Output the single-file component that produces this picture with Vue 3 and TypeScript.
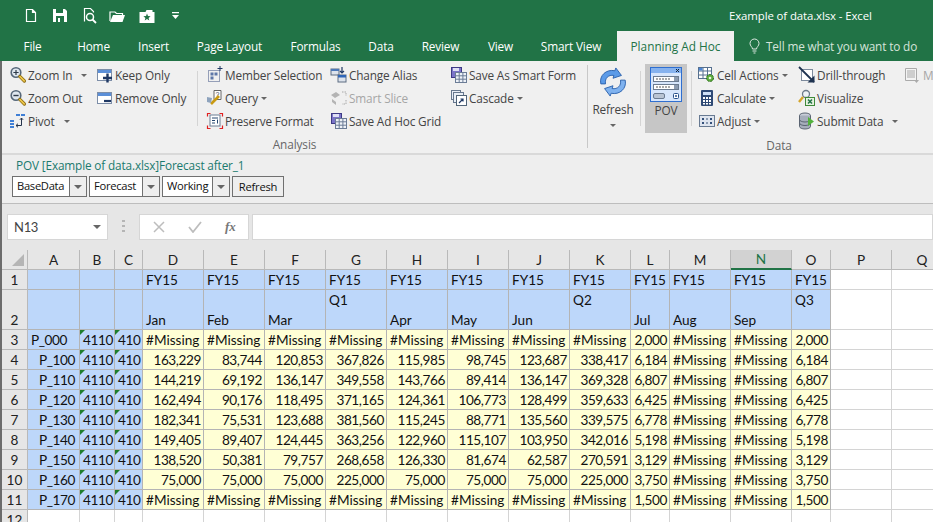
<script setup lang="ts">
interface Item { icon: string; label: string; caret?: 'near' | 'far'; off?: boolean }
const win = (extra: string) => `<rect x="1.5" y="3.5" width="14" height="11" fill="#fff" stroke="#7d8ea8"/><rect x="2" y="4" width="13" height="3" fill="#5b8fd8"/>${extra}`
const lens = (x: string) => `<circle cx="7" cy="6.5" r="4.8" fill="#dfe7ef" stroke="#566779" stroke-width="1.6"/>${x}<path d="M10.8 10.4l4.6 4.6" stroke="#8a6a10" stroke-width="3.2" stroke-linecap="round"/><path d="M11 10.6l4.2 4.2" stroke="#edc64a" stroke-width="1.8" stroke-linecap="round"/>`
const save = `<rect x="1.5" y="1.5" width="10" height="10" fill="#7b74c9" stroke="#3d3a85"/><rect x="3" y="2" width="6" height="3" fill="#dfe0f5"/><rect x="5.5" y="6.5" width="11" height="10" fill="#eef2f8" stroke="#6b7c96"/><path d="M5.5 9.8h11M5.5 13.2h11M9.2 6.5v10M12.9 6.5v10" stroke="#6b7c96" fill="none"/>`
const icons: Record<string, string> = {
  zoomIn: lens('<path d="M4.4 6.5h5.2M7 3.9v5.2" stroke="#2f3b4a" stroke-width="1.2"/>'),
  zoomOut: lens('<path d="M4.4 6.5h5.2" stroke="#2f3b4a" stroke-width="1.4"/>'),
  pivot: `<path d="M7 2h4v2H7zM12 2h4v2h-4zM1 8h4v2H1zM1 11h4v2H1zM1 14h4v2H1z" fill="#3f7fd6"/><path d="M12.5 6v7.5H7M7 13.5l2-1.8M7 13.5l2 1.8M12.5 6l-1.6 1.8M12.5 6l1.6 1.8" stroke="#26354d" fill="none"/>`,
  keepOnly: win('<path d="M7 12h9M11.5 7.5v9" stroke="#1f3864" stroke-width="2.4"/>'),
  removeOnly: win('<path d="M8 12h7" stroke="#1f3864" stroke-width="2.2"/>'),
  memberSel: `<rect x="2.5" y="4.5" width="11" height="11" fill="none" stroke="#3b4f80" stroke-dasharray="1 1"/><path d="M4.5 6.5h3v3h-3zM8.5 6.5h3v3h-3zM4.5 10.5h3v3h-3z" fill="#5f78a8"/><path d="M14 0v5M11.5 2.5h5" stroke="#1f3864"/>`,
  query: `<path d="M8 1.5h7v9H8z" fill="#fff" stroke="#666"/><text x="9.5" y="8" font-size="7" font-family="Liberation Sans" fill="#345">?</text><path d="M5 15l8-8" stroke="#c99a12" stroke-width="2.6"/><path d="M1 8l5 1-1 5-4-1z" fill="#8ea3bd"/>`,
  preserve: `<rect x="4" y="3" width="10" height="11" fill="#fff" stroke="#6c7c92"/><path d="M6 6h6M6 8.5h3M6 11h3" stroke="#26476f"/><path d="M11.5 7.5v4" stroke="#26476f"/><path d="M1.5 4.5v-3h3M13.5 1.5h3v3M1.5 13.5v3h3M13.5 16.5h3v-3" stroke="#e02020" fill="none" stroke-width="1.2"/>`,
  alias: `<rect x="1" y="3" width="8" height="6" fill="#dde3ec" stroke="#5d6d82"/><rect x="1" y="3" width="8" height="2" fill="#4c78b8"/><rect x="8" y="9" width="8" height="7" fill="#dde3ec" stroke="#5d6d82"/><rect x="8" y="9" width="8" height="2.5" fill="#2f66b8"/><path d="M12 1v6M10 5l2 2 2-2" stroke="#1f3864" fill="none" stroke-width="1.2"/>`,
  slice: `<path d="M1 6l5-3 4 3-5 3zM2 10l4 3v3l-4-3z" fill="#b4b4b4"/><path d="M12 3h4v4M16 11v4h-4" stroke="#a8a8a8" stroke-dasharray="1.5 1" fill="none"/>`,
  saveGrid: save,
  cascade: `<rect x="1.5" y="1.5" width="9" height="9" fill="#e8eef6" stroke="#66778e"/><rect x="3.5" y="3.5" width="10" height="10" fill="#e8eef6" stroke="#66778e"/><rect x="6.5" y="6.5" width="10" height="10" fill="#fff" stroke="#516478"/><path d="M9 14l4-4M10.5 10H13v2.5" stroke="#1f3864" fill="none" stroke-width="1.2"/>`,
  cellActions: `<rect x="0.5" y="1.5" width="13" height="11" fill="#fff" stroke="#56708f"/><path d="M0.5 5h13M5 1.5v11M9.5 1.5v11M0.5 9h13" stroke="#56708f"/><rect x="1" y="2" width="3.5" height="2.5" fill="#4d86d6"/><circle cx="12" cy="12" r="3.5" fill="#5cab3c" stroke="#2c6a1e" stroke-dasharray="2 1"/><circle cx="12" cy="12" r="1.3" fill="#e9f6e1"/>`,
  calculate: `<rect x="3" y="1" width="12" height="16" rx="1" fill="#2f4a75"/><rect x="5" y="3" width="8" height="3" fill="#cfe0f6"/><path d="M5 8h2v2H5zM8 8h2v2H8zM11 8h2v2h-2zM5 11h2v2H5zM8 11h2v2H8zM11 11h2v2h-2zM5 14h2v1.5H5zM8 14h2v1.5H8zM11 14h2v1.5h-2z" fill="#fff"/>`,
  adjust: `<rect x="1.5" y="3.5" width="15" height="11" fill="#dfe5ef" stroke="#687a92"/><path d="M4 6h2v2H4zM4 10h2v2H4zM12 6h2v2h-2zM12 10h2v2h-2z" fill="#34507a"/><path d="M8 6h2v2H8zM8 10h2v2H8z" fill="#8a9bb3"/>`,
  drill: `<rect x="3.5" y="3.5" width="11" height="11" fill="#fff" stroke="#7c8a9c"/><path d="M1 1l15 15" stroke="#1f3350" stroke-width="1.8"/><path d="M16.5 9.5v7h-7z" fill="#1f3350"/>`,
  visualize: `<circle cx="8" cy="5" r="3.5" fill="#eef2f6" stroke="#6c7a89" stroke-width="1.3"/><path d="M5 8l-4 5" stroke="#d4a52a" stroke-width="2.4"/><rect x="7.5" y="8.5" width="9" height="8" fill="#e6f2e0" stroke="#3f8a3a"/><path d="M10 10.5l4 4M14 10.5l-4 4" stroke="#217346" stroke-width="1.5"/>`,
  submit: `<ellipse cx="7" cy="3.5" rx="5.5" ry="2.5" fill="#c9ced8" stroke="#5b6472"/><path d="M1.5 3.5v11c0 1.4 2.5 2.5 5.5 2.5s5.5-1.1 5.5-2.5v-11" fill="#a6aebb" stroke="#5b6472"/><path d="M1.5 7.5c0 1.4 2.5 2.5 5.5 2.5s5.5-1.1 5.5-2.5M1.5 11c0 1.4 2.5 2.5 5.5 2.5s5.5-1.1 5.5-2.5" fill="none" stroke="#5b6472"/><path d="M10 5l6 4.5-6 4.5z" fill="#52b23c"/>`,
  grey: `<path d="M1.5 2.5h11v12h-11z" fill="#f4f4f4" stroke="#aaa"/><path d="M3 5h8M3 7h8M3 9h8M3 11h8" stroke="#a8a8a8"/><path d="M10 14h5l-2.5 3z" fill="#aaa"/>`,
}
const analysis: Item[][] = [
  [{ icon: 'zoomIn', label: 'Zoom In', caret: 'far' }, { icon: 'zoomOut', label: 'Zoom Out' }, { icon: 'pivot', label: 'Pivot', caret: 'far' }],
  [{ icon: 'keepOnly', label: 'Keep Only' }, { icon: 'removeOnly', label: 'Remove Only' }],
  [{ icon: 'memberSel', label: 'Member Selection' }, { icon: 'query', label: 'Query', caret: 'near' }, { icon: 'preserve', label: 'Preserve Format' }],
  [{ icon: 'alias', label: 'Change Alias' }, { icon: 'slice', label: 'Smart Slice', off: true }, { icon: 'saveGrid', label: 'Save Ad Hoc Grid' }],
  [{ icon: 'saveGrid', label: 'Save As Smart Form' }, { icon: 'cascade', label: 'Cascade', caret: 'near' }],
]
const analysisWidths = [87, 100, 124, 120, 130]
const dataCols: Item[][] = [
  [{ icon: 'cellActions', label: 'Cell Actions', caret: 'near' }, { icon: 'calculate', label: 'Calculate', caret: 'near' }, { icon: 'adjust', label: 'Adjust', caret: 'near' }],
  [{ icon: 'drill', label: 'Drill-through' }, { icon: 'visualize', label: 'Visualize' }, { icon: 'submit', label: 'Submit Data', caret: 'far' }],
  [{ icon: 'grey', label: 'M', off: true }],
]
const dataWidths = [100, 106, 60]
const tabs = [
  { t: 'File', w: 65 }, { t: 'Home', w: 57 }, { t: 'Insert', w: 63 }, { t: 'Page Layout', w: 89 }, { t: 'Formulas', w: 83 },
  { t: 'Data', w: 48 }, { t: 'Review', w: 71 }, { t: 'View', w: 49 }, { t: 'Smart View', w: 92 },
]
const columns = [
  { n: 'A', w: 52 }, { n: 'B', w: 35 }, { n: 'C', w: 28 }, { n: 'D', w: 61 }, { n: 'E', w: 61 }, { n: 'F', w: 61 }, { n: 'G', w: 61 }, { n: 'H', w: 61 },
  { n: 'I', w: 61 }, { n: 'J', w: 61 }, { n: 'K', w: 61 }, { n: 'L', w: 39 }, { n: 'M', w: 61 }, { n: 'N', w: 61 }, { n: 'O', w: 39 }, { n: 'P', w: 61 }, { n: 'Q', w: 61 },
]
const gridCols = '26px ' + columns.map(c => c.w + 'px').join(' ')
const headTop = ['Jan', 'Feb', 'Mar', 'Q1', 'Apr', 'May', 'Jun', 'Q2', 'Jul', 'Aug', 'Sep', 'Q3']
const M = '#Missing'
const rows: [string, string[]][] = [
  ['P_000', [M, M, M, M, M, M, M, M, '2,000', M, M, '2,000']],
  ['P_100', ['163,229', '83,744', '120,853', '367,826', '115,985', '98,745', '123,687', '338,417', '6,184', M, M, '6,184']],
  ['P_110', ['144,219', '69,192', '136,147', '349,558', '143,766', '89,414', '136,147', '369,328', '6,807', M, M, '6,807']],
  ['P_120', ['162,494', '90,176', '118,495', '371,165', '124,361', '106,773', '128,499', '359,633', '6,425', M, M, '6,425']],
  ['P_130', ['182,341', '75,531', '123,688', '381,560', '115,245', '88,771', '135,560', '339,575', '6,778', M, M, '6,778']],
  ['P_140', ['149,405', '89,407', '124,445', '363,256', '122,960', '115,107', '103,950', '342,016', '5,198', M, M, '5,198']],
  ['P_150', ['138,520', '50,381', '79,757', '268,658', '126,330', '81,674', '62,587', '270,591', '3,129', M, M, '3,129']],
  ['P_160', ['75,000', '75,000', '75,000', '225,000', '75,000', '75,000', '75,000', '225,000', '3,750', M, M, '3,750']],
  ['P_170', [M, M, M, M, M, M, M, M, '1,500', M, M, '1,500']],
]
const combos = [{ t: 'BaseData', w: 57 }, { t: 'Forecast', w: 53 }, { t: 'Working', w: 50 }]
</script>

<template>
  <div class="app">
    <header class="title">
      <div class="qat">
        <svg width="14" height="15" viewBox="0 0 14 15"><path d="M2.5 1.5h6l3 3v9h-9z M8.5 1.5v3h3" fill="none" stroke="#fff" stroke-width="1.2"/></svg>
        <svg width="16" height="15" viewBox="0 0 16 15"><path d="M1 1h12l2 2v11H1z" fill="#fff"/><path d="M4 1h7v4H4z" fill="#217346"/><path d="M4 8h8v6H4z" fill="#217346"/><path d="M6 10h2v4H6z" fill="#fff"/></svg>
        <svg width="16" height="17" viewBox="0 0 16 17"><path d="M2.5 14.5v-13h6l3 3v1" fill="none" stroke="#fff" stroke-width="1.2"/><circle cx="8" cy="10" r="3.5" fill="none" stroke="#fff" stroke-width="1.5"/><path d="M10.5 12.5l3.5 3.5" stroke="#fff" stroke-width="1.8"/></svg>
        <svg class="q4" width="17" height="14" viewBox="0 0 17 14"><path d="M1 12V3h5l1.5 1.5h6V6" fill="none" stroke="#fff" stroke-width="1.2"/><path d="M1 13l3-7h12l-2.5 7z" fill="#fff"/></svg>
        <svg class="q5" width="16" height="14" viewBox="0 0 16 14"><path d="M0.5 3h6l1-2h6v2h2v11H0.5z" fill="#fff"/><path d="M8 4.5l1 2.5 2.6.2-2 1.7.7 2.6L8 10l-2.300 1.500.7-2.600-2-1.700L7 7z" fill="#217346"/></svg>
        <svg class="qcust" width="7" height="7" viewBox="0 0 7 7"><path d="M0 0h7v1.2H0zM0 3h7L3.5 7z" fill="#fff"/></svg>
      </div>
      <div class="doc">Example of data.xlsx - Excel</div>
    </header>
    <nav class="tabs">
      <span v-for="t in tabs" :key="t.t" class="tab" :style="{ width: t.w + 'px' }">{{ t.t }}</span>
      <span class="tab active">Planning Ad Hoc</span>
      <span class="tell">
        <svg width="11" height="16" viewBox="0 0 11 16"><path d="M3.5 11c0-2-2.5-3-2.5-5.500a4.500 4.500 0 0 1 9 0C10 8 7.500 9 7.500 11zM3.500 13h4M4.500 15h2" fill="none" stroke="#dfe9e3"/></svg>
        Tell me what you want to do
      </span>
    </nav>
    <div class="body">
      <section class="ribbon">
        <div class="group analysis">
          <div class="cols">
            <template v-for="(col, i) in analysis" :key="i">
              <div class="col" :style="{ width: analysisWidths[i] + 'px' }">
                <div v-for="it in col" :key="it.label" class="item" :class="{ off: it.off }">
                  <svg class="ic" width="18" height="18" viewBox="0 0 18 18" v-html="icons[it.icon]"></svg>
                  <span>{{ it.label }}</span>
                  <i v-if="it.caret" class="caret" :class="it.caret"></i>
                </div>
              </div>
              <div v-if="i === 1" class="sep short"></div>
            </template>
          </div>
          <div class="glabel">Analysis</div>
        </div>
        <div class="sep full"></div>
        <div class="group data">
          <div class="cols">
            <div class="big refresh">
              <svg width="30" height="30" viewBox="0 0 32 32">
                <path d="M3 18C1 9 9 2 18 4l1-3 6 8-9 3 1-3C11 8 7 12 8 18z" fill="#5c9be8" stroke="#2c62ad"/>
                <path d="M29 14c2 9-6 16-15 14l-1 3-6-8 9-3-1 3c6 1 10-3 9-9z" fill="#7fb2ef" stroke="#2c62ad"/>
              </svg>
              <span class="bl">Refresh</span>
              <i class="caret lone"></i>
            </div>
            <div class="sep short narrowsep"></div>
            <div class="big pov">
              <svg width="32" height="35" viewBox="0 0 32 35">
                <rect x="0.5" y="0.5" width="31" height="34" fill="#d7e6fb" stroke="#2f6fd0"/>
                <rect x="1" y="1" width="30" height="5" fill="#86b2ee"/>
                <path d="M26 2l3 3M29 2l-3 3" stroke="#123"/>
                <rect x="3.5" y="9.5" width="25" height="5" fill="#fff" stroke="#6b7b90"/>
                <rect x="3.5" y="17.5" width="25" height="5" fill="#fff" stroke="#6b7b90"/>
                <path d="M6 12h14M6 20h14" stroke="#555" stroke-dasharray="2 1"/>
                <rect x="24" y="10" width="4" height="4" fill="#8c9bb0"/><rect x="24" y="18" width="4" height="4" fill="#8c9bb0"/>
                <rect x="3.5" y="26.5" width="11" height="5" rx="1.5" fill="#b9c4d3" stroke="#6b7b90"/>
                <rect x="23.5" y="26.5" width="5" height="5" rx="1" fill="#fff" stroke="#27508a"/>
                <circle cx="26" cy="29" r="1" fill="#27508a"/>
              </svg>
              <span class="bl">POV</span>
            </div>
            <div class="sep short narrowsep2"></div>
            <div v-for="(col, i) in dataCols" :key="i" class="col" :style="{ width: dataWidths[i] + 'px' }">
              <div v-for="it in col" :key="it.label" class="item" :class="{ off: it.off }">
                <svg class="ic" width="18" height="18" viewBox="0 0 18 18" v-html="icons[it.icon]"></svg>
                <span>{{ it.label }}</span>
                <i v-if="it.caret" class="caret" :class="it.caret"></i>
              </div>
            </div>
          </div>
          <div class="glabel">Data</div>
        </div>
      </section>
      <section class="povbar">
        <div class="povtitle">POV [Example of data.xlsx]Forecast after_1</div>
        <div class="povctl">
          <div v-for="c in combos" :key="c.t" class="combo">
            <span class="ctext" :style="{ width: c.w + 'px' }">{{ c.t }}</span>
            <span class="cbtn"><i></i></span>
          </div>
          <button class="pbtn" type="button">Refresh</button>
        </div>
      </section>
      <section class="fbar">
        <div class="namebox"><span>N13</span><i></i></div>
        <div class="dots"></div>
        <div class="fxbox">
          <svg width="12" height="12" viewBox="0 0 12 12"><path d="M1 1l10 10M11 1L1 11" stroke="#bdbdbd" stroke-width="1.5"/></svg>
          <svg width="14" height="12" viewBox="0 0 14 12"><path d="M1 6l4 5 8-10" stroke="#bdbdbd" stroke-width="1.8" fill="none"/></svg>
          <span class="fx">fx</span>
        </div>
        <div class="finput"></div>
      </section>
      <section class="sheet" :style="{ gridTemplateColumns: gridCols }">
        <div class="hd corner"><i></i></div>
        <div v-for="c in columns" :key="c.n" class="hd" :class="{ sel: c.n === 'N' }">{{ c.n }}</div>

        <div class="rh">1</div>
        <div v-for="i in 3" :key="'e1' + i" class="c blue"></div>
        <div v-for="i in 12" :key="'f' + i" class="c blue">FY15</div>
        <div class="c"></div><div class="c"></div>

        <div class="rh">2</div>
        <div v-for="i in 3" :key="'e2' + i" class="c blue"></div>
        <div v-for="h in headTop" :key="h" class="c blue" :class="{ top: h[0] === 'Q' }">{{ h }}</div>
        <div class="c"></div><div class="c"></div>

        <template v-for="(r, ri) in rows" :key="r[0]">
          <div class="rh">{{ ri + 3 }}</div>
          <div class="c blue num" :class="ri === 0 ? '' : 'right memberR'">{{ r[0] }}</div>
          <div class="c blue tri num">4110</div>
          <div class="c blue tri num">410</div>
          <div v-for="(v, vi) in r[1]" :key="vi" class="c yellow" :class="{ 'right num': v !== M }">{{ v }}</div>
          <div class="c"></div><div class="c"></div>
        </template>

        <div class="rh">12</div>
        <div v-for="c in columns" :key="'z' + c.n" class="c"></div>
      </section>
    </div>
  </div>
</template>

<style>
html, body { margin: 0; padding: 0; background: #fff; overflow: hidden; }
</style>

<style scoped>
.app { width: 933px; height: 522px; overflow: hidden; font-family: "Open Sans", "Noto Sans", sans-serif; font-size: 12px; color: #444; background: #fff; }
.title { height: 31px; background: #217346; display: flex; align-items: center; color: #fff; }
.qat { display: flex; align-items: center; gap: 14px; padding-left: 24px; width: 729px; box-sizing: border-box; flex: none; }
.q4 { margin-left: -3px; }
.q5 { margin-left: -1px; }
.qcust { margin-left: 3px; }
.doc { font-size: 11.4px; letter-spacing: -0.1px; white-space: nowrap; }
.tabs { height: 30px; background: #217346; display: flex; align-items: stretch; color: #fff; }
.tab { display: flex; align-items: center; justify-content: center; font-size: 11.8px; letter-spacing: -0.15px; white-space: nowrap; flex: none; }
.tab.active { background: #f0f0f0; color: #217346; width: 117px; letter-spacing: 0; }
.tell { display: flex; align-items: center; gap: 6px; margin-left: 15px; color: #d5e4da; font-size: 11.8px; letter-spacing: -0.15px; white-space: nowrap; }
.body { border-left: 2px solid #6c6c6c; }
.ribbon { height: 92px; background: #f0f0f0; display: flex; border-bottom: 2px solid #d9d9d9; color: #444; }
.group { display: flex; flex-direction: column; flex: none; }
.analysis { width: 585px; }
.data { width: 382px; }
.cols { display: flex; height: 72px; padding-top: 2px; box-sizing: border-box; }
.analysis .cols { padding-left: 8px; }
.col { display: flex; flex-direction: column; flex: none; }
.item { display: flex; align-items: center; height: 23px; white-space: nowrap; font-size: 11.8px; letter-spacing: -0.15px; }
.item.off { color: #a6a6a6; }
.ic { flex: none; margin-right: 1px; margin-left: -1px; }
.caret { flex: none; width: 0; height: 0; border-left: 3px solid transparent; border-right: 3px solid transparent; border-top: 3px solid #666; margin-top: 1px; }
.caret.near { margin-left: 3px; }
.caret.far { margin-left: 9px; }
.caret.lone { margin-top: 7px; }
.sep { flex: none; width: 1px; background: #d4d4d4; }
.sep.short { height: 55px; margin: 8px 9px 0 0; }
.sep.full { height: 83px; margin-top: 4px; background: #c8c8c8; }
.big { flex: none; display: flex; flex-direction: column; align-items: center; box-sizing: border-box; }
.refresh { width: 46px; margin-left: 2px; padding-top: 4px; height: 69px; }
.refresh svg { margin-bottom: 4px; }
.bl { font-size: 11.8px; letter-spacing: -0.15px; line-height: 16px; }
.narrowsep { margin: 8px 4px 0 4px !important; }
.pov { width: 42px; height: 69px; background: #c6c6c6; padding-top: 3px; margin-top: 1px; }
.narrowsep2 { margin: 8px 7px 0 4px !important; }
.glabel { height: 20px; line-height: 20px; padding-top: 2px; text-align: center; color: #666; font-size: 11.8px; letter-spacing: -0.1px; }
.povbar { height: 48px; background: #eeeeee; border-bottom: 1px solid #bdbdbd; padding-left: 10px; }
.povtitle { height: 21px; line-height: 20px; padding-left: 4px; color: #1b7a6e; font-size: 11.8px; letter-spacing: -0.15px; }
.povctl { display: flex; gap: 2px; height: 21px; color: #111; }
.combo { display: flex; border: 1px solid #707070; box-sizing: border-box; height: 21px; }
.ctext { background: #fff; padding-left: 4px; box-sizing: border-box; line-height: 18px; font-size: 11.2px; letter-spacing: -0.3px; border-right: 1px solid #707070; }
.cbtn { width: 16px; display: flex; align-items: center; justify-content: center; background: #eeeeee; }
.cbtn i { width: 0; height: 0; border-left: 4px solid transparent; border-right: 4px solid transparent; border-top: 4px solid #666; }
.pbtn { width: 52px; height: 21px; padding: 0; border: 1px solid #707070; background: #eeeeee; font: inherit; font-size: 11.2px; letter-spacing: -0.2px; color: #111; }
.fbar { height: 46px; background: #e6e6e6; display: flex; padding: 10px 0 0 5px; box-sizing: border-box; }
.namebox { width: 101px; height: 26px; background: #fff; border: 1px solid #d6d6d6; box-sizing: border-box; display: flex; align-items: center; justify-content: space-between; padding: 0 6px; font-family: Lato, sans-serif; font-size: 13px; letter-spacing: -0.3px; color: #444; }
.namebox i { width: 0; height: 0; border-left: 4px solid transparent; border-right: 4px solid transparent; border-top: 4px solid #666; }
.dots { width: 3px; height: 14px; margin: 6px 14px 0 14px; background: repeating-linear-gradient(#b5b5b5 0 2px, transparent 2px 5px); }
.fxbox { width: 110px; height: 26px; background: #fff; border: 1px solid #d6d6d6; box-sizing: border-box; display: flex; align-items: center; padding-left: 13px; gap: 23px; }
.fx { font-family: "Liberation Serif", serif; font-style: italic; font-weight: bold; font-size: 13px; color: #777; }
.finput { flex: 1; height: 26px; margin-left: 3px; background: #fff; border: 1px solid #d6d6d6; box-sizing: border-box; }
.sheet { display: grid; grid-template-rows: 20px 20px 40px repeat(10, 20px); font-family: Lato, sans-serif; font-size: 13.6px; color: #111; width: 1100px; }
.hd { background: #e6e6e6; border-right: 1px solid #b9b9b9; border-bottom: 1px solid #b9b9b9; display: flex; align-items: center; justify-content: center; box-sizing: border-box; color: #222; }
.hd.sel { background: #d2d2d2; color: #217346; border-bottom: 2px solid #217346; }
.corner { position: relative; }
.corner i { position: absolute; right: 3px; bottom: 3px; width: 0; height: 0; border-left: 12px solid transparent; border-bottom: 12px solid #b5b5b5; }
.rh { background: #e6e6e6; border-right: 1px solid #b9b9b9; border-bottom: 1px solid #b9b9b9; display: flex; align-items: flex-end; justify-content: center; box-sizing: border-box; color: #222; line-height: 17px; }
.c { border-right: 1px solid #d4d4d4; border-bottom: 1px solid #d4d4d4; box-sizing: border-box; padding: 0 2px 0 3px; display: flex; align-items: flex-end; line-height: 17px; white-space: nowrap; overflow: hidden; position: relative; }
.blue { background: #bdd7fa; border-color: #b4b4b4; }
.yellow { background: #ffffd5; border-color: #b4b4b4; }
.right { justify-content: flex-end; }
.top { align-items: flex-start; padding-top: 2px; }
.num { letter-spacing: -0.4px; }
.memberR { padding-right: 4px; }
.tri::before { content: ""; position: absolute; left: 0; top: 0; width: 0; height: 0; border-top: 5px solid #1e7d2d; border-right: 5px solid transparent; }
</style>
